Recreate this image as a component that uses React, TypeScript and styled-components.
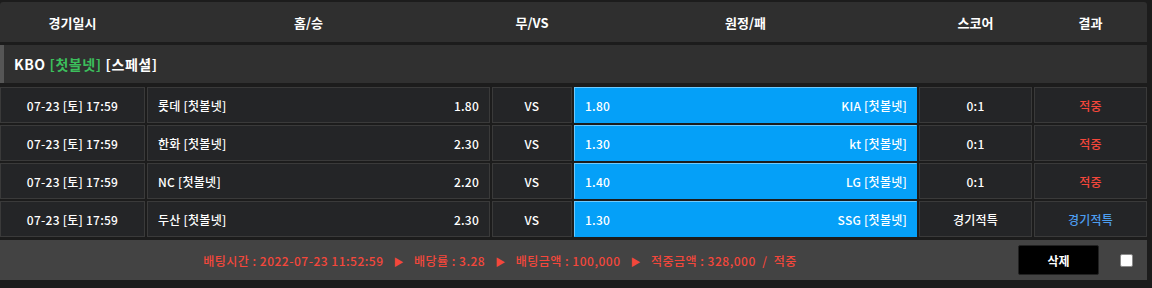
import React from "react";
import styled, { createGlobalStyle } from "styled-components";

const GlobalStyle = createGlobalStyle`
  html, body {
    margin: 0;
    padding: 0;
    background: #1c1c1c;
  }
  body {
    font-family: "Noto Sans CJK KR", "Noto Sans", sans-serif;
    color: #fff;
  }
`;

const COLS = "145px 343px 80px 343px 113px 113px";

const Wrapper = styled.div`
  width: 1147px;
  padding-top: 2px;
  display: flex;
  flex-direction: column;
`;

const HeaderRow = styled.div`
  display: grid;
  grid-template-columns: ${COLS};
  column-gap: 2px;
  height: 40px;
  background: #2f2f2f;
  border-radius: 3px 3px 0 0;
`;

const HeaderCell = styled.div<{ $shift?: number }>`
  display: flex;
  align-items: center;
  justify-content: center;
  font-size: 13px;
  font-weight: 700;
  color: #fff;
  padding-right: ${({ $shift }) => ($shift ? `${$shift}px` : "0")};
`;

const LeagueRow = styled.div`
  margin-top: 3px;
  height: 38px;
  background: #303030;
  border-left: 4px solid #565656;
  display: flex;
  align-items: center;
  padding-left: 10px;
  font-size: 14px;
  font-weight: 700;
  letter-spacing: 0.6px;
`;

const Green = styled.span`
  color: #3cbf5c;
`;

const Rows = styled.div`
  margin-top: 4px;
  display: flex;
  flex-direction: column;
  gap: 2px;
`;

const Row = styled.div`
  display: grid;
  grid-template-columns: ${COLS};
  column-gap: 2px;
  height: 36px;
`;

const Cell = styled.div<{ $align?: "center" | "split"; $color?: string }>`
  box-sizing: border-box;
  background: #242527;
  border: 1px solid #3a3a3a;
  display: flex;
  align-items: center;
  justify-content: ${({ $align }) =>
    $align === "split" ? "space-between" : "center"};
  padding: 0 10px;
  font-size: 12px;
  font-weight: 500;
  letter-spacing: 0.25px;
  color: ${({ $color }) => $color || "#fff"};
`;

const AwayCell = styled.div`
  box-sizing: border-box;
  background: #05a0f8;
  border: 1px solid #05a0f8;
  border-top-color: #6fcbff;
  border-left-color: #6fcbff;
  display: flex;
  align-items: center;
  justify-content: space-between;
  padding: 0 9px 0 10px;
  font-size: 12px;
  font-weight: 500;
  letter-spacing: 0.25px;
  color: #fff;
`;

const Footer = styled.div`
  margin-top: 3px;
  height: 40px;
  background: #434343;
  display: flex;
  align-items: center;
  padding-right: 14px;
`;

const Summary = styled.div`
  flex: 1;
  text-align: center;
  font-size: 12px;
  font-weight: 500;
  letter-spacing: 0.5px;
  color: #f4473b;
  white-space: pre;
`;

const Arrow = styled.span`
  font-size: 10px;
  margin: 0 10px;
`;

const DeleteButton = styled.button`
  margin-left: 18px;
  width: 81px;
  height: 30px;
  background: #000;
  border: 1px solid #222;
  border-radius: 2px;
  color: #fff;
  font-family: inherit;
  font-size: 12px;
  font-weight: 700;
`;

const Check = styled.span`
  margin-left: 21px;
  width: 13px;
  height: 13px;
  box-sizing: border-box;
  background: #fff;
  border: 1px solid #8a8a8a;
  border-radius: 2px;
`;

type Game = {
  home: string;
  homeOdds: string;
  away: string;
  awayOdds: string;
  score: string;
  result: string;
  resultColor: string;
};

const games: Game[] = [
  { home: "롯데 [첫볼넷]", homeOdds: "1.80", away: "KIA [첫볼넷]", awayOdds: "1.80", score: "0:1", result: "적중", resultColor: "#f4473b" },
  { home: "한화 [첫볼넷]", homeOdds: "2.30", away: "kt [첫볼넷]", awayOdds: "1.30", score: "0:1", result: "적중", resultColor: "#f4473b" },
  { home: "NC [첫볼넷]", homeOdds: "2.20", away: "LG [첫볼넷]", awayOdds: "1.40", score: "0:1", result: "적중", resultColor: "#f4473b" },
  { home: "두산 [첫볼넷]", homeOdds: "2.30", away: "SSG [첫볼넷]", awayOdds: "1.30", score: "경기적특", result: "경기적특", resultColor: "#4d9ef0" },
];

export default function App() {
  return (
    <>
      <GlobalStyle />
      <Wrapper>
        <HeaderRow>
          <HeaderCell>경기일시</HeaderCell>
          <HeaderCell $shift={20}>홈/승</HeaderCell>
          <HeaderCell>무/VS</HeaderCell>
          <HeaderCell>원정/패</HeaderCell>
          <HeaderCell>스코어</HeaderCell>
          <HeaderCell>결과</HeaderCell>
        </HeaderRow>

        <LeagueRow>
          KBO&nbsp;<Green>[첫볼넷]</Green>&nbsp;[스페셜]
        </LeagueRow>

        <Rows>
          {games.map((g, i) => (
            <Row key={i}>
              <Cell>07-23 [토] 17:59</Cell>
              <Cell $align="split">
                <span>{g.home}</span>
                <span>{g.homeOdds}</span>
              </Cell>
              <Cell>VS</Cell>
              <AwayCell>
                <span>{g.awayOdds}</span>
                <span>{g.away}</span>
              </AwayCell>
              <Cell>{g.score}</Cell>
              <Cell $color={g.resultColor}>{g.result}</Cell>
            </Row>
          ))}
        </Rows>

        <Footer>
          <Summary>
            배팅시간 : 2022-07-23 11:52:59<Arrow>▶</Arrow>배당률 : 3.28<Arrow>▶</Arrow>배팅금액 : 100,000<Arrow>▶</Arrow>적중금액 : 328,000  /  적중
          </Summary>
          <DeleteButton>삭제</DeleteButton>
          <Check />
        </Footer>
      </Wrapper>
    </>
  );
}
